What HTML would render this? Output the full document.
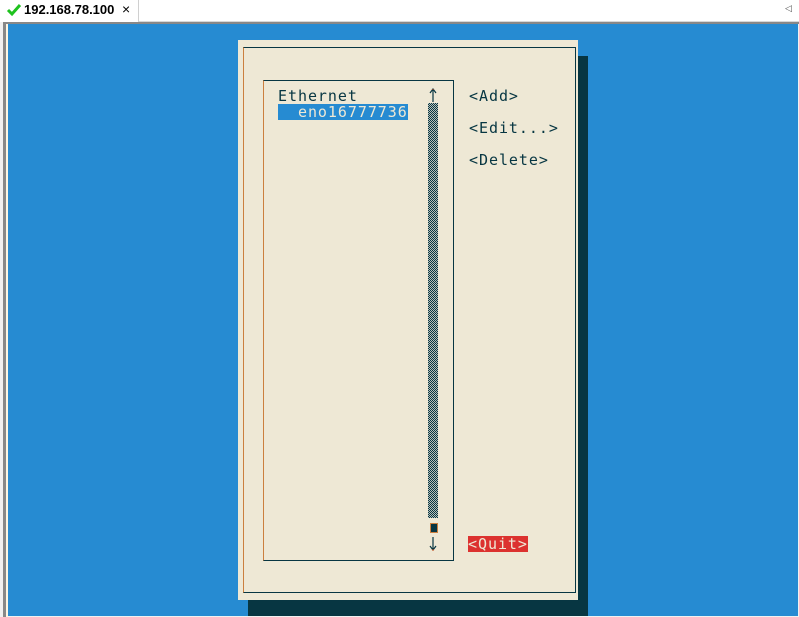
<!DOCTYPE html>
<html><head><style>
body{margin:0;width:799px;height:617px;overflow:hidden;background:#f0f0f0;position:relative;font-family:"Liberation Sans",sans-serif}
.a{position:absolute}
.m{font-family:"DejaVu Sans Mono","Liberation Mono",monospace;font-size:15px;letter-spacing:0.95px;color:#073642;line-height:16px;white-space:pre}
</style></head><body>
<div class="a" style="left:0;top:0;width:799px;height:21px;background:#fff;border-bottom:1px solid #d8d8d8"></div>
<div class="a" style="left:0;top:0;width:138px;height:22px;background:#fff;border-right:1px solid #d0d0d0"></div>
<svg class="a" style="left:6px;top:3px" width="16" height="14"><path d="M2 7 L6 11 L14 2" stroke="#1ec21e" stroke-width="3" fill="none"/></svg>
<div class="a" style="left:24px;top:2px;font-size:13px;font-weight:bold;color:#000">192.168.78.100</div>
<div class="a" style="left:122px;top:1px;font-size:14px;color:#000">×</div>
<div class="a" style="left:785px;top:3px;font-size:9px;color:#555">◁</div>
<div class="a" style="left:3px;top:22px;width:3px;height:595px;background:#888"></div>
<div class="a" style="left:6px;top:22px;width:2px;height:595px;background:#fdf6e3"></div>
<div class="a" style="left:3px;top:22px;width:796px;height:2px;background:#888"></div>
<div class="a" style="left:8px;top:24px;width:790px;height:592px;background:#268bd2"></div>
<div class="a" style="left:248px;top:56px;width:340px;height:560px;background:#073642"></div>
<div class="a" style="left:238px;top:40px;width:340px;height:560px;background:#eee8d5"></div>
<div class="a" style="left:243px;top:47px;width:331px;height:544px;border:1px solid #073642;border-left-color:#cb7f3e"></div>
<div class="a" style="left:263px;top:80px;width:189px;height:479px;border:1px solid #073642;border-left-color:#cb7f3e"></div>
<div class="a m" style="left:278px;top:88px">Ethernet</div>
<div class="a m" style="left:278px;top:104px;background:#268bd2;color:#eee8d5;width:130px">  eno16777736</div>
<svg class="a" style="left:428px;top:88px" width="10" height="15"><path d="M5 14V2M2 5L5 1L8 5" stroke="#073642" stroke-width="1.2" fill="none"/><path d="M5 2V1" stroke="#cb4b16"/></svg>
<div class="a" style="left:428px;top:103px;width:10px;height:415px;background:repeating-conic-gradient(#073642 0 25%,#b8bfb8 0 50%) 0 0/2px 2px"></div>
<div class="a" style="left:430px;top:523px;width:8px;height:10px;background:#073642;border:1px solid #cb7f3e;box-sizing:border-box"></div>
<svg class="a" style="left:428px;top:536px" width="10" height="16"><path d="M5 1V13M2 10L5 14L8 10" stroke="#073642" stroke-width="1.2" fill="none"/><path d="M5 13V15" stroke="#cb4b16"/></svg>
<div class="a m" style="left:469px;top:88px">&lt;Add&gt;</div>
<div class="a m" style="left:469px;top:120px">&lt;Edit...&gt;</div>
<div class="a m" style="left:469px;top:152px">&lt;Delete&gt;</div>
<div class="a m" style="left:468px;top:536px;background:#dc322f;color:#eee8d5;width:60px">&lt;Quit&gt;</div>
</body></html>
